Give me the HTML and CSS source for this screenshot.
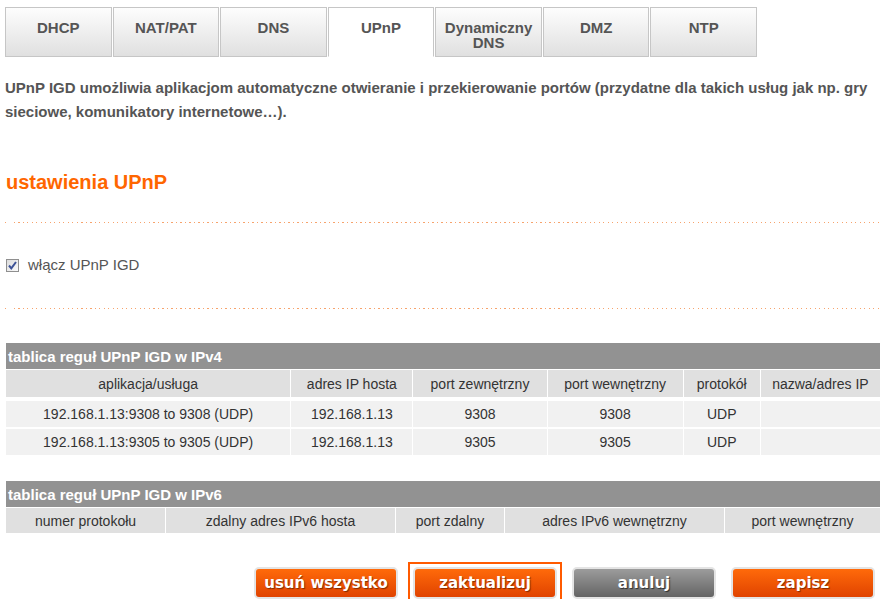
FILE: index.html
```html
<!DOCTYPE html>
<html lang="pl">
<head>
  <meta charset="UTF-8" />
  <title>UPnP</title>
  <link rel="stylesheet" href="styles.css">
</head>
<body>
  <div class="page">
    <ul class="tabs">
      <li class="tab">DHCP</li>
      <li class="tab">NAT/PAT</li>
      <li class="tab">DNS</li>
      <li class="tab active">UPnP</li>
      <li class="tab">Dynamiczny DNS</li>
      <li class="tab">DMZ</li>
      <li class="tab">NTP</li>
    </ul>

    <p class="intro">UPnP IGD umożliwia aplikacjom automatyczne otwieranie i przekierowanie portów (przydatne dla takich usług jak np. gry sieciowe, komunikatory internetowe…).</p>

    <h2 class="section-title">ustawienia UPnP</h2>
    <div class="divider"></div>

    <label class="check-row">
      <span class="checkbox">
        <svg width="13" height="13" viewBox="0 0 13 13">
          <path d="M3 6.5 L5.3 9.3 L10 3" fill="none" stroke="#3d5296" stroke-width="2"/>
        </svg>
      </span>
      włącz UPnP IGD
    </label>
    <div class="divider"></div>

    <table class="rules">
      <colgroup>
        <col style="width:284px"><col style="width:122px"><col style="width:134px">
        <col style="width:136px"><col style="width:77px"><col style="width:120px">
      </colgroup>
      <thead>
        <tr><th class="title" colspan="6">tablica reguł UPnP IGD w IPv4</th></tr>
        <tr class="cols">
          <th>aplikacja/usługa</th>
          <th>adres IP hosta</th>
          <th>port zewnętrzny</th>
          <th>port wewnętrzny</th>
          <th>protokół</th>
          <th>nazwa/adres IP</th>
        </tr>
      </thead>
      <tbody>
        <tr>
          <td>192.168.1.13:9308 to 9308 (UDP)</td>
          <td>192.168.1.13</td>
          <td>9308</td>
          <td>9308</td>
          <td>UDP</td>
          <td></td>
        </tr>
        <tr>
          <td>192.168.1.13:9305 to 9305 (UDP)</td>
          <td>192.168.1.13</td>
          <td>9305</td>
          <td>9305</td>
          <td>UDP</td>
          <td></td>
        </tr>
      </tbody>
    </table>

    <table class="rules ipv6">
      <colgroup>
        <col style="width:159px"><col style="width:230px"><col style="width:109px">
        <col style="width:220px"><col style="width:156px">
      </colgroup>
      <thead>
        <tr><th class="title" colspan="5">tablica reguł UPnP IGD w IPv6</th></tr>
        <tr class="cols">
          <th>numer protokołu</th>
          <th>zdalny adres IPv6 hosta</th>
          <th>port zdalny</th>
          <th>adres IPv6 wewnętrzny</th>
          <th>port wewnętrzny</th>
        </tr>
      </thead>
    </table>

    <div class="actions">
      <button class="btn">usuń wszystko</button>
      <button class="btn focused">zaktualizuj</button>
      <button class="btn grey">anuluj</button>
      <button class="btn">zapisz</button>
    </div>
  </div>
</body>
</html>
```

FILE: styles.css
```css
body {
  margin: 0;
  padding: 0;
  background: #fff;
  font-family: "Liberation Sans", Arial, sans-serif;
  color: #555;
}

.page {
  padding: 7px 8px 0 5px;
}

.tabs {
  list-style: none;
  margin: 0;
  padding: 0;
  display: flex;
  gap: 1px;
  width: 752px;
}

.tab {
  flex: 1;
  box-sizing: border-box;
  height: 50px;
  padding: 12px 4px 0;
  border: 1px solid #c6c6c6;
  background: linear-gradient(to bottom, #fdfdfd, #e0e0e0);
  text-align: center;
  font-size: 15px;
  font-weight: bold;
  line-height: 15px;
  color: #555;
}

.tab.active {
  background: #fff;
  border-bottom-color: #fff;
}

.intro {
  margin: 19px 0 0;
  font-size: 15px;
  font-weight: bold;
  line-height: 24px;
  color: #555;
}

.section-title {
  margin: 47px 0 0 1px;
  font-size: 20px;
  line-height: 23px;
  color: #ff6600;
}

.divider {
  height: 1px;
  margin: 28px 0 0;
  background: repeating-linear-gradient(to right, #f7a36c 0 1px, transparent 1px 4.5px);
}

.check-row {
  display: flex;
  align-items: center;
  gap: 9px;
  margin: 33px 0 34px 1px;
  font-size: 15px;
  line-height: 18px;
  color: #555;
}

.check-row + .divider {
  margin-top: 0;
}

.checkbox {
  display: block;
  width: 13px;
  height: 13px;
  box-sizing: border-box;
  border: 1px solid #8f8f8f;
  background: linear-gradient(to bottom right, #dcdcdc, #fbfbfb);
  position: relative;
}

.checkbox svg {
  position: absolute;
  left: -1px;
  top: -1px;
}

.rules {
  margin: 34px 0 0 1px;
  width: 874px;
  table-layout: fixed;
  border-collapse: separate;
  border-spacing: 0;
  font-size: 14px;
  color: #333;
}

.rules.ipv6 {
  margin-top: 26px;
}

.rules th,
.rules td {
  padding: 0;
  text-align: center;
  font-weight: normal;
  border-left: 1px solid #fff;
}

.rules th:first-child,
.rules td:first-child {
  border-left: none;
}

.rules .title {
  height: 26px;
  padding-left: 2px;
  background: #929292;
  color: #fff;
  font-size: 15px;
  font-weight: bold;
  text-align: left;
}

.rules .cols th {
  height: 27px;
  border-top: 1px solid #fff;
  background: #e0e0e0;
}

.rules.ipv6 .cols th {
  height: 25px;
}

.rules td {
  height: 26px;
  border-top: 2px solid #fff;
  background: #f1f1f1;
}

.rules tbody tr:first-child td {
  border-top-width: 4px;
}

.actions {
  display: flex;
  justify-content: flex-end;
  gap: 15px;
  margin: 34px 4px 0 0;
}

.btn {
  position: relative;
  box-sizing: border-box;
  width: 144px;
  height: 32px;
  padding: 0;
  border: 2px solid #e4e4e4;
  border-radius: 5px;
  background: linear-gradient(to bottom, #ff6a0a, #e04300);
  color: #fff;
  font-family: "DejaVu Sans", Verdana, sans-serif;
  font-size: 15px;
  font-weight: bold;
  text-shadow: 1px 1px 1px rgba(60, 20, 0, 0.6);
  cursor: pointer;
}

.btn.grey {
  background: linear-gradient(to bottom, #9c9c9c, #646464);
  text-shadow: 1px 1px 1px rgba(0, 0, 0, 0.6);
}

/* square focus frame round the active button */
.btn.focused::after {
  content: "";
  position: absolute;
  inset: -7px;
  border: 2px solid #ff5a00;
}
```
